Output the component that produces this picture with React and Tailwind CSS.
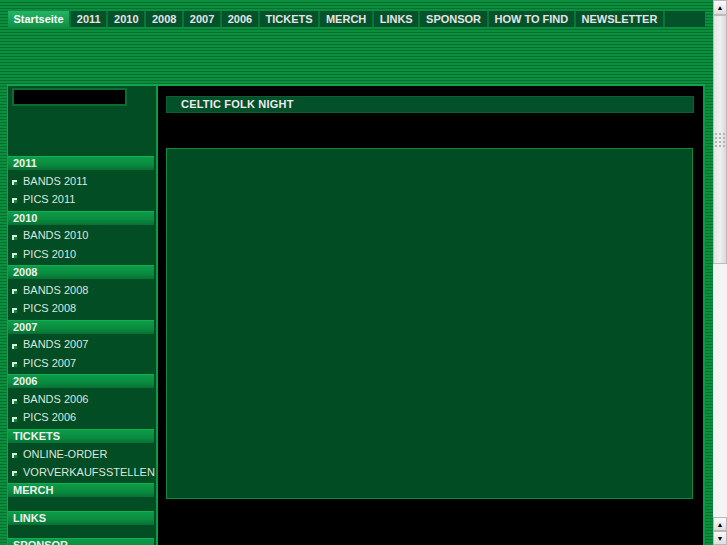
import React from "react";

const stripes =
  "bg-[repeating-linear-gradient(180deg,#0c8e3f_0px,#0c8e3f_2px,#06702f_2px,#06702f_3px)]";

const navItems = [
  "2011",
  "2010",
  "2008",
  "2007",
  "2006",
  "TICKETS",
  "MERCH",
  "LINKS",
  "SPONSOR",
  "HOW TO FIND",
  "NEWSLETTER",
];

const sections = [
  { title: "2011", items: ["BANDS 2011", "PICS 2011"] },
  { title: "2010", items: ["BANDS 2010", "PICS 2010"] },
  { title: "2008", items: ["BANDS 2008", "PICS 2008"] },
  { title: "2007", items: ["BANDS 2007", "PICS 2007"] },
  { title: "2006", items: ["BANDS 2006", "PICS 2006"] },
  { title: "TICKETS", items: ["ONLINE-ORDER", "VORVERKAUFSSTELLEN"] },
  { title: "MERCH", items: [] },
  { title: "LINKS", items: [] },
  { title: "SPONSOR", items: [] },
];

function SectionHead({ title }) {
  return (
    <div className="h-[18.2px] shrink-0 pr-[2px]">
      <div className="h-[14px] border-t border-[#12b052] bg-[linear-gradient(180deg,#0c9c48_0%,#0a8a3f_60%,#077034_100%)] pl-[5px] text-[11px] font-bold leading-[13px] text-[#f0f0f0]">
        {title}
      </div>
    </div>
  );
}

function SideItem({ label }) {
  return (
    <div className="flex h-[18.2px] shrink-0 items-center pb-[4px] pl-[4px] text-[11px] leading-none text-[#dde6dd]">
      <span className="mt-[3px] mr-[6px] h-[5px] w-[5px] border-t-2 border-l-2 border-[#d8ecd8] bg-[#0a8a3f]" />
      <span className="whitespace-nowrap">{label}</span>
    </div>
  );
}

function Scrollbar() {
  return (
    <div className="flex h-full w-[14px] shrink-0 flex-col bg-[#f2f2f2]">
      <div className="flex h-[15px] shrink-0 items-center justify-center border border-[#b8b8b8] bg-[linear-gradient(180deg,#fafafa,#dedede)] text-[7px] leading-none text-black">
        ▲
      </div>
      <div className="flex h-[249px] shrink-0 flex-col items-center justify-center border border-[#bdbdbd] bg-[linear-gradient(90deg,#e4e4e4,#f0f0f0_50%,#d8d8d8)]">
        <div className="grid grid-cols-3 gap-[2px]">
          {Array.from({ length: 12 }).map((_, i) => (
            <span key={i} className="h-[2px] w-[2px] bg-[#b4b4b4]" />
          ))}
        </div>
      </div>
      <div className="flex-1 bg-[#f4f4f4]" />
      <div className="flex h-[14px] shrink-0 items-center justify-center border border-[#b8b8b8] bg-[linear-gradient(180deg,#fafafa,#dedede)] text-[7px] leading-none text-black">
        ▲
      </div>
      <div className="flex h-[14px] shrink-0 items-center justify-center border border-[#b8b8b8] bg-[linear-gradient(180deg,#fafafa,#dedede)] text-[7px] leading-none text-black">
        ▼
      </div>
    </div>
  );
}

export default function App() {
  return (
    <div
      className="flex h-[545px] w-[727px] overflow-hidden bg-black"
      style={{ fontFamily: '"Liberation Sans", Arial, sans-serif' }}
    >
      <div className={`flex h-full flex-1 flex-col pt-[11px] pr-[8px] pl-[7px] ${stripes}`}>
        {/* top navigation */}
        <div className="ml-[1px] flex h-[16px] shrink-0 gap-[2px] bg-[#0a7538]">
          <div className="bg-[linear-gradient(180deg,#22b562,#109048)] px-[5.5px] text-[11px] font-bold leading-[16px] text-white">
            Startseite
          </div>
          {navItems.map((item) => (
            <div
              key={item}
              className="whitespace-nowrap bg-[#04522a] px-[5.7px] text-[11px] font-bold leading-[16px] text-[#e4e4e4]"
            >
              {item}
            </div>
          ))}
          <div className="flex-1 bg-[#04522a]" />
        </div>

        <div className="h-[59px] shrink-0 border-b-2 border-[#10a44c]" />

        {/* main row */}
        <div className="flex min-h-0 flex-1 border-l border-[#0fa34b]">
          <aside className="flex w-[148px] shrink-0 flex-col bg-[#034d25]">
            <div className="mt-[2px] ml-[4px] h-[18px] w-[115px] shrink-0 border-2 border-[#0a6e34] bg-black" />
            <div className="h-[50px] shrink-0" />
            {sections.map((s) => (
              <React.Fragment key={s.title}>
                <SectionHead title={s.title} />
                {s.items.map((it) => (
                  <SideItem key={it} label={it} />
                ))}
                {s.items.length === 0 && <div className="h-[9px] shrink-0" />}
              </React.Fragment>
            ))}
          </aside>
          <div className="w-[2px] shrink-0 bg-[#0c9a45]" />
          <main className="flex flex-1 flex-col border-r-2 border-[#0c9a45] bg-black pt-[10px] pl-[8px] pr-[9px]">
            <div className="h-[17px] shrink-0 border border-[#06622f] bg-[#03502a] pl-[14px] text-[11px] font-bold leading-[15px] tracking-[0.2px] text-[#ececec]">
              CELTIC FOLK NIGHT
            </div>
            <div className="mt-[35px] mr-[1px] h-[351px] shrink-0 border border-[#0b8a3d] bg-[#024c23]" />
          </main>
        </div>
      </div>
      <Scrollbar />
    </div>
  );
}
